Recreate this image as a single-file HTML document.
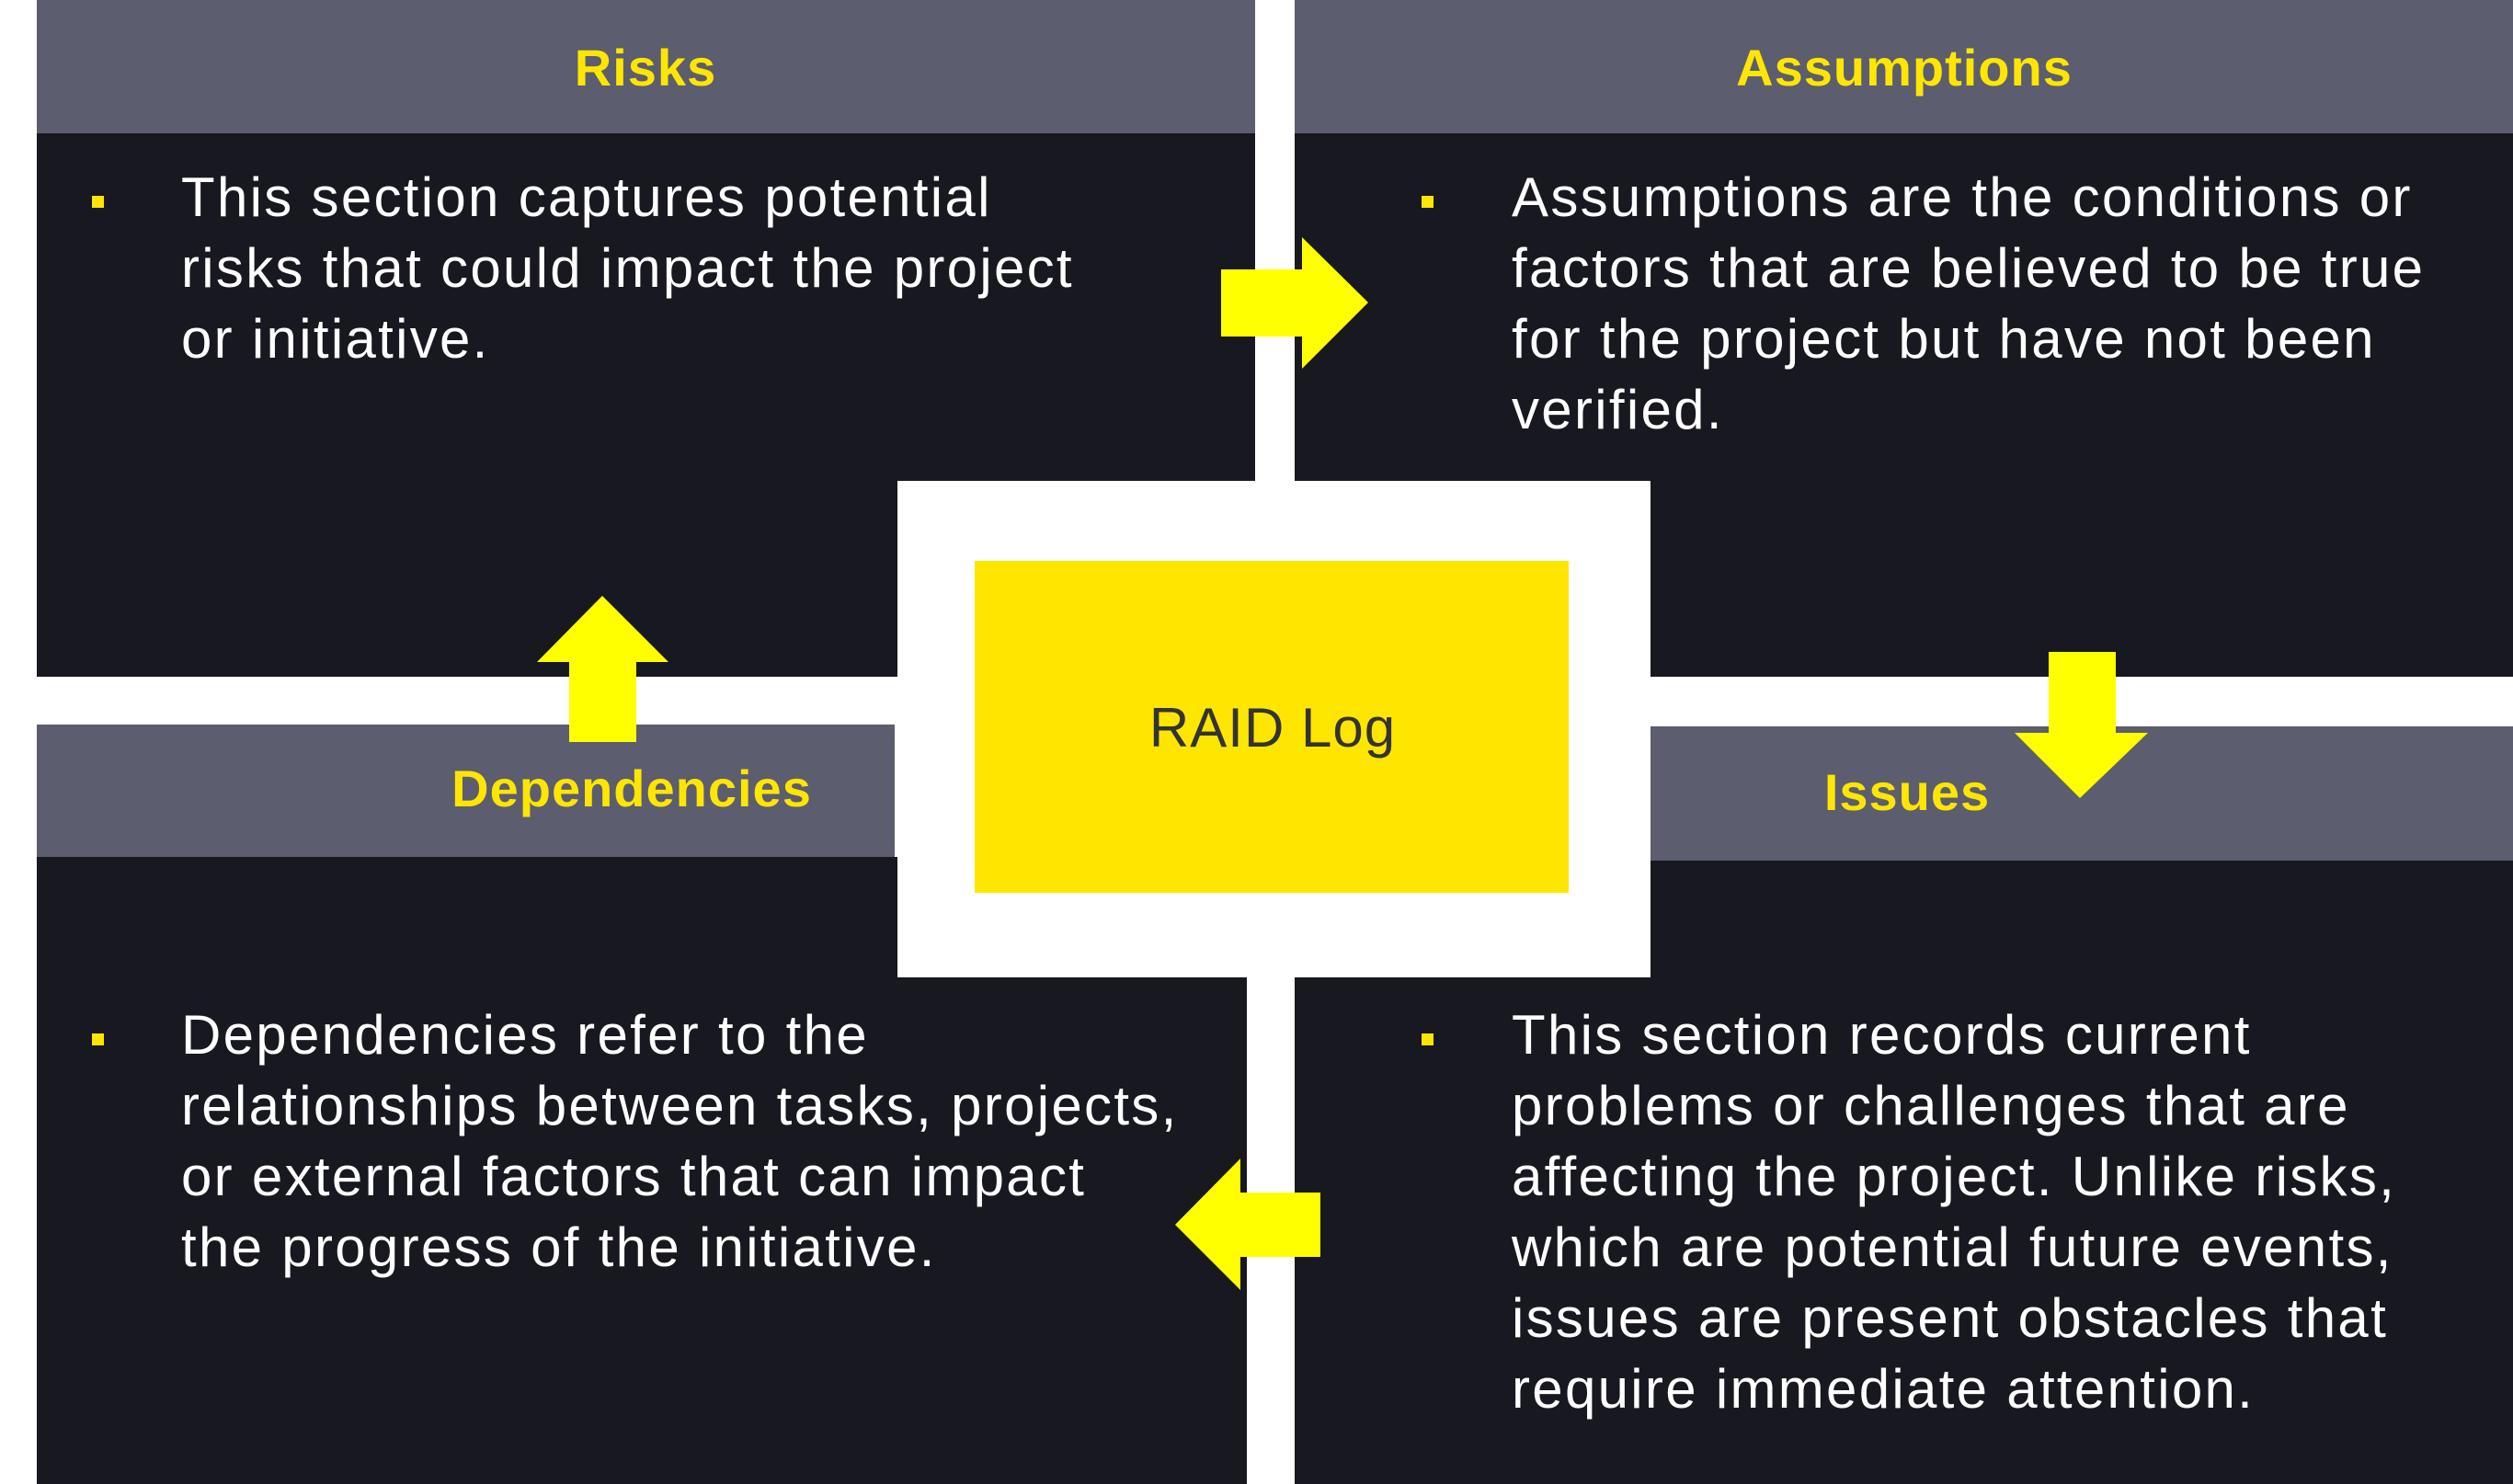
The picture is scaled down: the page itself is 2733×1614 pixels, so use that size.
<!DOCTYPE html>
<html><head><meta charset="utf-8"><style>
html,body{margin:0;padding:0}
body{width:2733px;height:1614px;background:#fff;position:relative;overflow:hidden;font-family:"Liberation Sans",sans-serif}
.b{position:absolute}
.g{background:#5c5d6f}
.d{background:#181820}
.h{position:absolute;color:#ffe600;font-size:56px;font-weight:bold;letter-spacing:1px;transform:translateX(-50%);white-space:nowrap;line-height:1}
.t{position:absolute;color:#fff;font-size:60px;line-height:77px;letter-spacing:2.3px;white-space:nowrap}
.bu{position:absolute;width:13px;height:13px;background:#ffe600}
</style></head><body>
<div class="b d" style="left:40px;top:0;width:1325px;height:736px"></div>
<div class="b g" style="left:40px;top:0;width:1325px;height:145px"></div>
<div class="b d" style="left:1408px;top:0;width:1325px;height:736px"></div>
<div class="b g" style="left:1408px;top:0;width:1325px;height:145px"></div>
<div class="b d" style="left:40px;top:932px;width:1316px;height:682px"></div>
<div class="b g" style="left:40px;top:788px;width:933px;height:144px"></div>
<div class="b d" style="left:1408px;top:936px;width:1325px;height:678px"></div>
<div class="b g" style="left:1795px;top:790px;width:938px;height:146px"></div>
<div class="b" style="left:976px;top:523px;width:819px;height:540px;background:#fff"></div>
<div class="b" style="left:1060px;top:610px;width:646px;height:361px;background:#ffe600"></div>
<div class="h" style="left:1384px;top:762px;color:#333;font-weight:normal;font-size:60px">RAID Log</div>

<div class="h" style="left:702px;top:46px">Risks</div>
<div class="h" style="left:2071px;top:46px">Assumptions</div>
<div class="h" style="left:687px;top:830px">Dependencies</div>
<div class="h" style="left:2074px;top:834px">Issues</div>

<div class="bu" style="left:100px;top:213px"></div>
<div class="t" style="left:197px;top:176px">This section captures potential<br>risks that could impact the project<br>or initiative.</div>
<div class="bu" style="left:1546px;top:213px"></div>
<div class="t" style="left:1644px;top:176px">Assumptions are the conditions or<br>factors that are believed to be true<br>for the project but have not been<br>verified.</div>
<div class="bu" style="left:100px;top:1124px"></div>
<div class="t" style="left:197px;top:1087px">Dependencies refer to the<br>relationships between tasks, projects,<br>or external factors that can impact<br>the progress of the initiative.</div>
<div class="bu" style="left:1546px;top:1124px"></div>
<div class="t" style="left:1644px;top:1087px">This section records current<br>problems or challenges that are<br>affecting the project. Unlike risks,<br>which are potential future events,<br>issues are present obstacles that<br>require immediate attention.</div>

<svg class="b" style="left:0;top:0" width="2733" height="1614">
<g fill="#ffff00">
<polygon points="1328,293 1416,293 1416,258 1488,329 1416,401 1416,366 1328,366"/>
<polygon points="655,648 727,720 692,720 692,807 619,807 619,720 584,720"/>
<polygon points="2228,709 2301,709 2301,797 2336,797 2262,868 2191,797 2228,797"/>
<polygon points="1436,1297 1349,1297 1349,1260 1278,1332 1349,1403 1349,1367 1436,1367"/>
</g></svg>
</body></html>
